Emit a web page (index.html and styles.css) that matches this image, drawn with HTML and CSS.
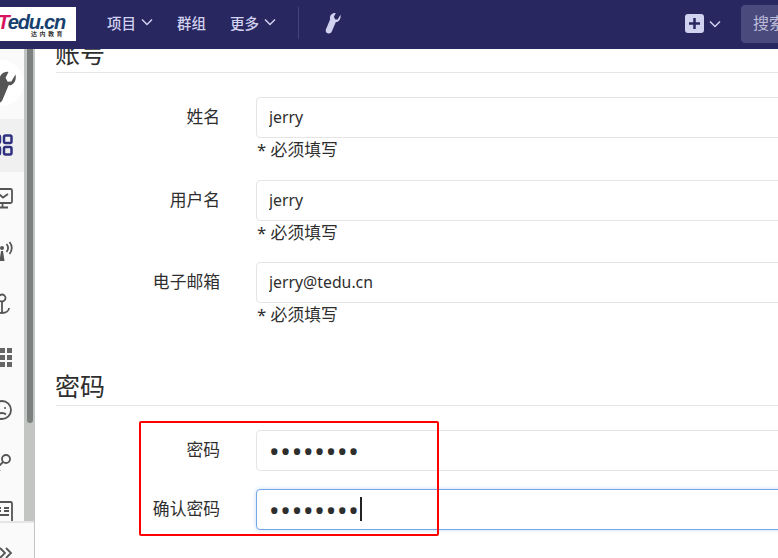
FILE: index.html
```html
<!DOCTYPE html>
<html lang="zh-CN">
<head>
    <meta charset="UTF-8">
    <title>账号设置</title>
    <link rel="stylesheet" href="styles.css">
</head>
<body>
    <header class="topbar">
        <div class="logo">
            <span class="logo-word"><span class="logo-t">T</span>edu.cn</span>
            <span class="logo-sub">达内教育</span>
        </div>
        <nav class="nav">
            <a class="nav-item">项目
                <svg class="chev" viewBox="0 0 12 8"><path d="M1 1.5l5 5 5-5"/></svg>
            </a>
            <a class="nav-item">群组</a>
            <a class="nav-item">更多
                <svg class="chev" viewBox="0 0 12 8"><path d="M1 1.5l5 5 5-5"/></svg>
            </a>
        </nav>
        <div class="nav-wrench">
            <svg viewBox="0 0 24 32" width="17" height="22"><path class="wrench" d="M23.500 4c1 4.500-.5 8.500-4 10-1 .4-1.800.5-2.600.4L11 28.500c-1 2.400-3.600 3.500-6 2.500s-3.500-3.600-2.500-6L8.500 11c-1-4 .6-7.500 4-9 1.400-.6 2.900-.8 4.300-.5L14 7l2 4 3.500-.2z"/></svg>
        </div>
        <div class="top-right">
            <span class="plus-box"><svg viewBox="0 0 19 19" width="19" height="19"><rect class="plus-bg" width="19" height="19" rx="3"/><path class="plus-mark" d="M9.500 4v11M4 9.500h11"/></svg></span>
            <svg class="chev" viewBox="0 0 12 8"><path d="M1 1.500l5 5 5-5"/></svg>
            <div class="search">搜索</div>
        </div>
    </header>

    <div class="page">
        <aside class="sidebar">
            <div class="side-top">
                <div class="side-circle">
                    <svg class="side-icon" viewBox="0 0 24 32"><path class="fill" d="M23.500 4c1 4.500-.5 8.500-4 10-1 .4-1.800.5-2.600.4L11 28.500c-1 2.400-3.600 3.500-6 2.500s-3.500-3.600-2.500-6L8.500 11c-1-4 .6-7.500 4-9 1.400-.6 2.900-.8 4.300-.5L14 7l2 4 3.500-.2z"/></svg>
                </div>
            </div>
            <div class="side-item active">
                <svg class="side-icon blue" viewBox="0 0 22 22"><rect x="1.500" y="1.500" width="7.500" height="7.500" rx="1.500"/><rect x="13" y="1.500" width="7.500" height="7.500" rx="1.500"/><rect x="1.500" y="13" width="7.500" height="7.500" rx="1.500"/><rect x="13" y="13" width="7.500" height="7.500" rx="1.500"/></svg>
            </div>
            <div class="side-item">
                <svg class="side-icon" viewBox="0 0 22 22"><rect x="2" y="2" width="19" height="14" rx="1.500"/><path d="M5 11l4-3 3 2.500 5-3.500M11.500 16v4M6 20.500h11"/></svg>
            </div>
            <div class="side-item">
                <svg class="side-icon" viewBox="0 0 22 22"><circle class="fill" cx="11" cy="8" r="2"/><path class="fill" d="M10 11h2l1.500 10h-5z"/><path d="M6.500 4c-2 2.500-2 5.500 0 8M15.500 4c2 2.500 2 5.500 0 8M18.500 2c3 3.500 3 8.500 0 12"/></svg>
            </div>
            <div class="side-item">
                <svg class="side-icon" viewBox="0 0 22 22"><circle cx="11" cy="5" r="3.500"/><path d="M11 8.500v11M4 15c0 3 3 5 7 5s7-2 7-5"/></svg>
            </div>
            <div class="side-item">
                <svg class="side-icon gray" viewBox="0 0 22 22"><rect x="2" y="2" width="5" height="5"/><rect x="9" y="2" width="5" height="5"/><rect x="16" y="2" width="5" height="5"/><rect x="2" y="9" width="5" height="5"/><rect x="9" y="9" width="5" height="5"/><rect x="16" y="9" width="5" height="5"/><rect x="2" y="16" width="5" height="5"/><rect x="9" y="16" width="5" height="5"/><rect x="16" y="16" width="5" height="5"/></svg>
            </div>
            <div class="side-item">
                <svg class="side-icon" viewBox="0 0 22 22"><circle cx="11" cy="11" r="9"/><path d="M7 15.500c2-2 6-2 8 0"/><circle class="fill" cx="8" cy="9" r="1"/><circle class="fill" cx="14" cy="9" r="1"/></svg>
            </div>
            <div class="side-item">
                <svg class="side-icon" viewBox="0 0 22 22"><circle cx="15" cy="7" r="4"/><path d="M12 10L2 20M6 16l3 3"/></svg>
            </div>
            <div class="side-item list">
                <svg class="side-icon" viewBox="0 0 22 22"><rect x="2" y="1" width="19" height="20" rx="1.500"/><path d="M5 7h5M5 10h5M13 7h5M13 10h5M5 14h13"/></svg>
            </div>
            <div class="side-collapse">
                <svg class="collapse-icon" viewBox="0 0 14 12"><path d="M1 1l5 5-5 5M7 1l5 5-5 5"/></svg>
            </div>
        </aside>
        <div class="side-scroll"><div class="side-thumb"></div></div>

        <main class="content">
            <h3 class="section-title">账号</h3>
            <div class="form-row">
                <label class="form-label">姓名</label>
                <div class="form-field">
                    <input class="form-input" type="text" value="jerry">
                    <div class="form-note">* 必须填写</div>
                </div>
            </div>
            <div class="form-row">
                <label class="form-label">用户名</label>
                <div class="form-field">
                    <input class="form-input" type="text" value="jerry">
                    <div class="form-note">* 必须填写</div>
                </div>
            </div>
            <div class="form-row">
                <label class="form-label">电子邮箱</label>
                <div class="form-field">
                    <input class="form-input" type="text" value="jerry@tedu.cn">
                    <div class="form-note">* 必须填写</div>
                </div>
            </div>

            <h3 class="section-title second">密码</h3>
            <div class="form-row pass">
                <label class="form-label">密码</label>
                <div class="form-field">
                    <input class="form-input dots" type="password" value="12345678">
                </div>
            </div>
            <div class="form-row pass">
                <label class="form-label">确认密码</label>
                <div class="form-field">
                    <input class="form-input dots focus" type="password" value="12345678">
                    <span class="caret"></span>
                </div>
            </div>
            <div class="red-mark"></div>
        </main>
    </div>
</body>
</html>
```

FILE: styles.css
```css
* {
    box-sizing: border-box;
}
html, body {
    height: 100%;
}
body {
    margin: 0;
    overflow: hidden;
    font-family: "Noto Sans", "Noto Sans CJK SC", sans-serif;
    font-size: 16px;
    color: #2e2e2e;
    background-color: #fff;
}

/* top bar */
.topbar {
    display: flex;
    align-items: center;
    height: 49px;
    background-color: #29275f;
    color: #d1d1f0;
    white-space: nowrap;
}
.logo {
    display: flex;
    flex-direction: column;
    align-items: flex-end;
    flex: none;
    width: 76px;
    height: 34px;
    padding: 6px 11px 0 0;
    margin-top: -1px;
    background-color: #fff;
    overflow: hidden;
}
.logo-word {
    font-family: "Liberation Sans", sans-serif;
    font-size: 20px;
    font-weight: 700;
    font-style: italic;
    line-height: 18px;
    letter-spacing: -1.200px;
    color: #17406f;
}
.logo-t {
    color: #d9145f;
}
.logo-sub {
    margin: 0;
    font-size: 6px;
    line-height: 7px;
    font-weight: 700;
    letter-spacing: 2.500px;
    color: #333;
}
.nav {
    display: flex;
    align-items: center;
    gap: 24px;
    margin-left: 31px;
}
.nav-item {
    display: flex;
    align-items: center;
    gap: 5px;
    font-size: 14.500px;
    font-weight: 500;
    margin-top: -5px;
}
.chev {
    width: 12px;
    height: 8px;
    fill: none;
    stroke: #d1d1f0;
    stroke-width: 1.500;
}
.nav-wrench {
    display: flex;
    align-items: center;
    height: 32px;
    margin-left: 22px;
    margin-top: -3px;
    padding-left: 25px;
    border-left: 1px solid #45437c;
}
.wrench {
    fill: #d1d1f0;
}
.top-right {
    display: flex;
    align-items: center;
    margin-left: auto;
    margin-right: -20px;
    margin-top: -2px;
}
.plus-box {
    display: flex;
    margin-right: 5px;
}
.plus-bg {
    fill: #d1d1f0;
}
.plus-mark {
    fill: none;
    stroke: #29275f;
    stroke-width: 2.500;
}
.search {
    width: 57px;
    height: 38px;
    margin-left: 20px;
    padding-left: 12px;
    border-radius: 4px;
    background-color: #4b4a7d;
    color: #bdbdd9;
    font-size: 16px;
    line-height: 37px;
    overflow: hidden;
}

/* page */
.page {
    display: flex;
    height: 509px;
    overflow: hidden;
}
.sidebar {
    position: relative;
    flex: none;
    width: 24px;
    height: 509px;
    background-color: #fafafa;
    overflow: hidden;
}
.side-top {
    height: 70px;
    padding-top: 11px;
}
.side-circle {
    display: flex;
    align-items: center;
    width: 46px;
    height: 46px;
    margin-left: -22px;
    border-radius: 50%;
    background-color: #fff;
}
.side-circle .side-icon {
    width: 25px;
    height: 34px;
    margin: 8px 0 0 13px;
}
.side-item {
    display: flex;
    align-items: center;
    height: 52.900px;
}
.side-item.active {
    background-color: #f0f0f0;
}
.side-item.list {
    margin-top: -4px;
}
.side-icon {
    flex: none;
    width: 22px;
    height: 22px;
    margin-left: -9px;
    fill: none;
    stroke: #555;
    stroke-width: 1.800;
}
.side-icon .fill {
    fill: #555;
    stroke: none;
}
.side-icon.blue {
    stroke: #303080;
    stroke-width: 2.500;
}
.side-icon.gray rect {
    fill: #666;
    stroke: none;
}
.side-scroll {
    flex: none;
    width: 11px;
    height: 509px;
    padding: 0 2px 0 3px;
    background-color: #c3c5c3;
}
.side-thumb {
    height: 374px;
    border-radius: 0 0 3px 3px;
    background-color: #7c8180;
}
.side-collapse {
    position: fixed;
    left: 0;
    top: 521px;
    width: 34px;
    height: 37px;
    padding-top: 24px;
    background-color: #fafafa;
    border-top: 2px solid #e5e5e5;
}
.collapse-icon {
    display: block;
    width: 14px;
    height: 12px;
    margin-left: -1px;
    fill: none;
    stroke: #555;
    stroke-width: 1.800;
}

/* form */
.content {
    position: relative;
    flex: none;
    width: 800px;
    margin-left: 21px;
}
.section-title {
    height: 33px;
    margin: 0;
    border-bottom: 1px solid #e5e5e5;
    font-size: 25px;
    font-weight: 400;
    line-height: 26px;
    text-indent: -1px;
    color: #2e2e2e;
}
.content > .section-title:first-child {
    margin-top: -9px;
}
.section-title.second {
    height: 52.500px;
    margin-top: 9px;
    padding-top: 19px;
}
.form-row {
    display: flex;
    height: 82.500px;
}
.content > .section-title + .form-row {
    margin-top: 24px;
}
.form-row.pass {
    height: 59px;
}
.form-label {
    flex: none;
    width: 164px;
    padding-top: 8px;
    text-align: right;
    font-size: 16.800px;
    line-height: 24px;
}
.form-field {
    position: relative;
    flex: none;
    width: 600px;
    margin-left: 36px;
}
.form-input {
    display: block;
    width: 100%;
    height: 41px;
    padding: 0 12px 1px;
    border: 1px solid #e5e5e5;
    border-radius: 4px;
    outline: 0;
    background-color: #fff;
    font-family: inherit;
    font-size: 15.800px;
    color: #2e2e2e;
}
.form-input.dots {
    padding-bottom: 0;
    font-size: 28px;
    letter-spacing: 0.800px;
}
.form-input.focus {
    border-color: #73a7e8;
    box-shadow: 0 0 4px rgba(31, 120, 209, 0.25);
}
.form-note {
    margin: 1px 0 0 1px;
    font-size: 16.800px;
    line-height: 21px;
}
.caret {
    position: absolute;
    left: 104px;
    top: 8px;
    width: 2px;
    height: 24px;
    background-color: #222;
}
.red-mark {
    position: absolute;
    left: 83px;
    top: 372px;
    width: 300px;
    height: 115px;
    border: 2px solid #f00;
    border-radius: 2px;
}
```
